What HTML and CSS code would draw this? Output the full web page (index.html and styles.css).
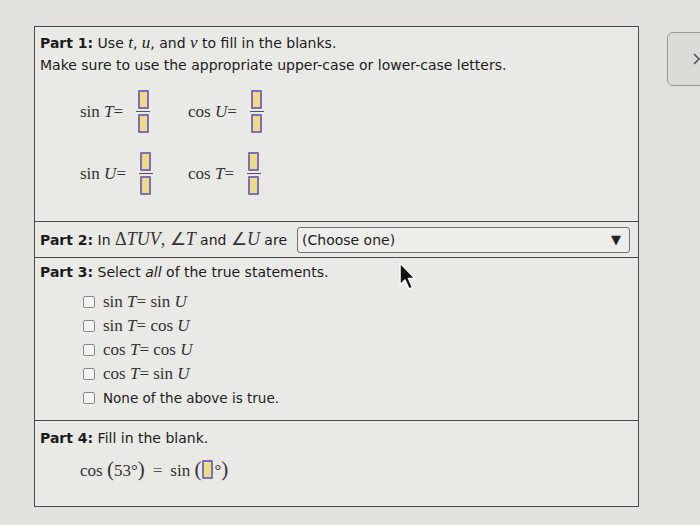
FILE: index.html
```html
<!DOCTYPE html>
<html>
<head>
<meta charset="utf-8">
<link rel="stylesheet" href="styles.css">
</head>
<body>
<div class="page">
  <div class="panel">
    <section class="part part1">
      <p class="line"><b>Part 1:</b> Use <i class="mv">t</i>, <i class="mv">u</i>, and <i class="mv">v</i> to fill in the blanks.</p>
      <p class="line">Make sure to use the appropriate upper-case or lower-case letters.</p>
      <div class="eqgrid">
        <div class="eq"><span class="math">sin <i>T</i>=</span><span class="frac"><span class="blank"></span><span class="bar"></span><span class="blank"></span></span></div>
        <div class="eq"><span class="math">cos <i>U</i>=</span><span class="frac"><span class="blank"></span><span class="bar"></span><span class="blank"></span></span></div>
        <div class="eq"><span class="math">sin <i>U</i>=</span><span class="frac"><span class="blank"></span><span class="bar"></span><span class="blank"></span></span></div>
        <div class="eq"><span class="math">cos <i>T</i>=</span><span class="frac"><span class="blank"></span><span class="bar"></span><span class="blank"></span></span></div>
      </div>
    </section>
    <section class="part part2">
      <span class="line nowrap"><b>Part 2:</b> In <span class="math">&#916;<i>TUV</i>, &#8736;<i>T</i></span> and <span class="math">&#8736;<i>U</i></span> are</span>
      <div class="select"><span>(Choose one)</span><span class="tri">&#9660;</span></div>
    </section>
    <section class="part part3">
      <p class="line"><b>Part 3:</b> Select <i>all</i> of the true statements.</p>
      <ul class="opts">
        <li><span class="cb"></span><span class="math">sin <i>T</i>= sin <i>U</i></span></li>
        <li><span class="cb"></span><span class="math">sin <i>T</i>= cos <i>U</i></span></li>
        <li><span class="cb"></span><span class="math">cos <i>T</i>= cos <i>U</i></span></li>
        <li><span class="cb"></span><span class="math">cos <i>T</i>= sin <i>U</i></span></li>
        <li><span class="cb"></span><span class="txt">None of the above is true.</span></li>
      </ul>
    </section>
    <section class="part part4">
      <p class="line"><b>Part 4:</b> Fill in the blank.</p>
      <div class="eq4 math">cos <span class="paren">(</span>53&#176;<span class="paren">)</span><span class="eqs">=</span>sin <span class="paren">(</span><span class="blank small"></span>&#176;<span class="paren">)</span></div>
    </section>
  </div>
  <div class="sidebtn"><svg width="10" height="14" viewBox="0 0 10 14"><path d="M2 2 L7 7 L2 12" fill="none" stroke="#555" stroke-width="1.6"/></svg></div>
</div>
<svg class="cursor" width="20" height="30" viewBox="0 0 20 30">
  <path d="M2 2 L2 24 L7 19 L11 28 L14.5 26.5 L10.5 17.5 L17 17.5 Z" fill="#111" stroke="#f4f4f4" stroke-width="1.6" stroke-linejoin="round"/>
</svg>
</body>
</html>
```
FILE: styles.css
```css
html, body {
  margin: 0;
  padding: 0;
  width: 700px;
  height: 525px;
  overflow: hidden;
  background: #e2e1dd;
  font-family: "DejaVu Sans", Verdana, sans-serif;
  font-size: 14px;
  color: #1c1c1c;
}
.page {
  display: flex;
  align-items: flex-start;
  padding: 26px 0 0 34px;
}
.panel {
  flex-shrink: 0;
  width: 603px;
  border: 1px solid #4a4a4a;
  background: #e9e9e5;
}
.part {
  border-top: 1px solid #4a4a4a;
}
.part:first-child { border-top: none; }
.line { margin: 0; line-height: 22px; }
.nowrap { white-space: nowrap; flex-shrink: 0; }
.mv { font-family: "Liberation Serif", serif; font-size: 17px; }
.math { font-family: "Liberation Serif", "Times New Roman", serif; font-size: 17px; color: #333; }
.part1 { padding: 5px 5px 0 5px; height: 194px; box-sizing: border-box; }
.eqgrid {
  display: grid;
  grid-template-columns: 108px 120px;
  row-gap: 19px;
  margin: 14px 0 0 40px;
}
.eq { display: flex; align-items: center; gap: 13px; }
.frac { display: inline-flex; flex-direction: column; align-items: center; gap: 2px; }
.bar { width: 14px; height: 1px; background: #555; }
.blank {
  display: block;
  width: 7px;
  height: 15px;
  border: 2px solid #7b70b4;
  border-radius: 1px;
  background: #eedb87;
}
.blank.small { display: inline-block; height: 15px; vertical-align: -3px; margin: 0 1px; }
.part2 {
  display: flex;
  align-items: center;
  gap: 10px;
  height: 36px;
  padding: 0 5px;
  box-sizing: border-box;
}
.part2 .math { font-size: 18px; }
.select {
  flex-shrink: 0;
  width: 333px;
  height: 26px;
  box-sizing: border-box;
  border: 1px solid #707070;
  border-radius: 3px;
  background: #ededea;
  display: flex;
  align-items: center;
  justify-content: space-between;
  padding: 0 8px 0 4px;
  font-size: 14px;
}
.tri { font-size: 13px; color: #222; }
.part3 { padding: 3px 5px 0 5px; height: 163px; box-sizing: border-box; }
.opts { list-style: none; margin: 7px 0 0 43px; padding: 0; }
.opts li { display: flex; align-items: center; height: 24px; gap: 8px; }
.cb {
  width: 10px;
  height: 10px;
  border: 1px solid #8a8a8a;
  border-radius: 2px;
  background: #f3f3f0;
}
.txt { font-size: 13.5px; color: #222; }
.part4 { padding: 6px 5px 0 5px; height: 86px; box-sizing: border-box; }
.eq4 { margin: 8px 0 0 40px; font-size: 17px; }
.paren { font-size: 21px; }
.eqs { margin: 0 8px; color: #555; }
.sidebtn {
  flex-shrink: 0;
  margin: 6px 0 0 28px;
  width: 50px;
  height: 54px;
  border: 1px solid #9a9a9a;
  border-radius: 6px;
  background: #dcdbd7;
  display: flex;
  align-items: center;
  padding-left: 24px;
  box-sizing: border-box;
}
.cursor { position: absolute; left: 398px; top: 261px; }
```
